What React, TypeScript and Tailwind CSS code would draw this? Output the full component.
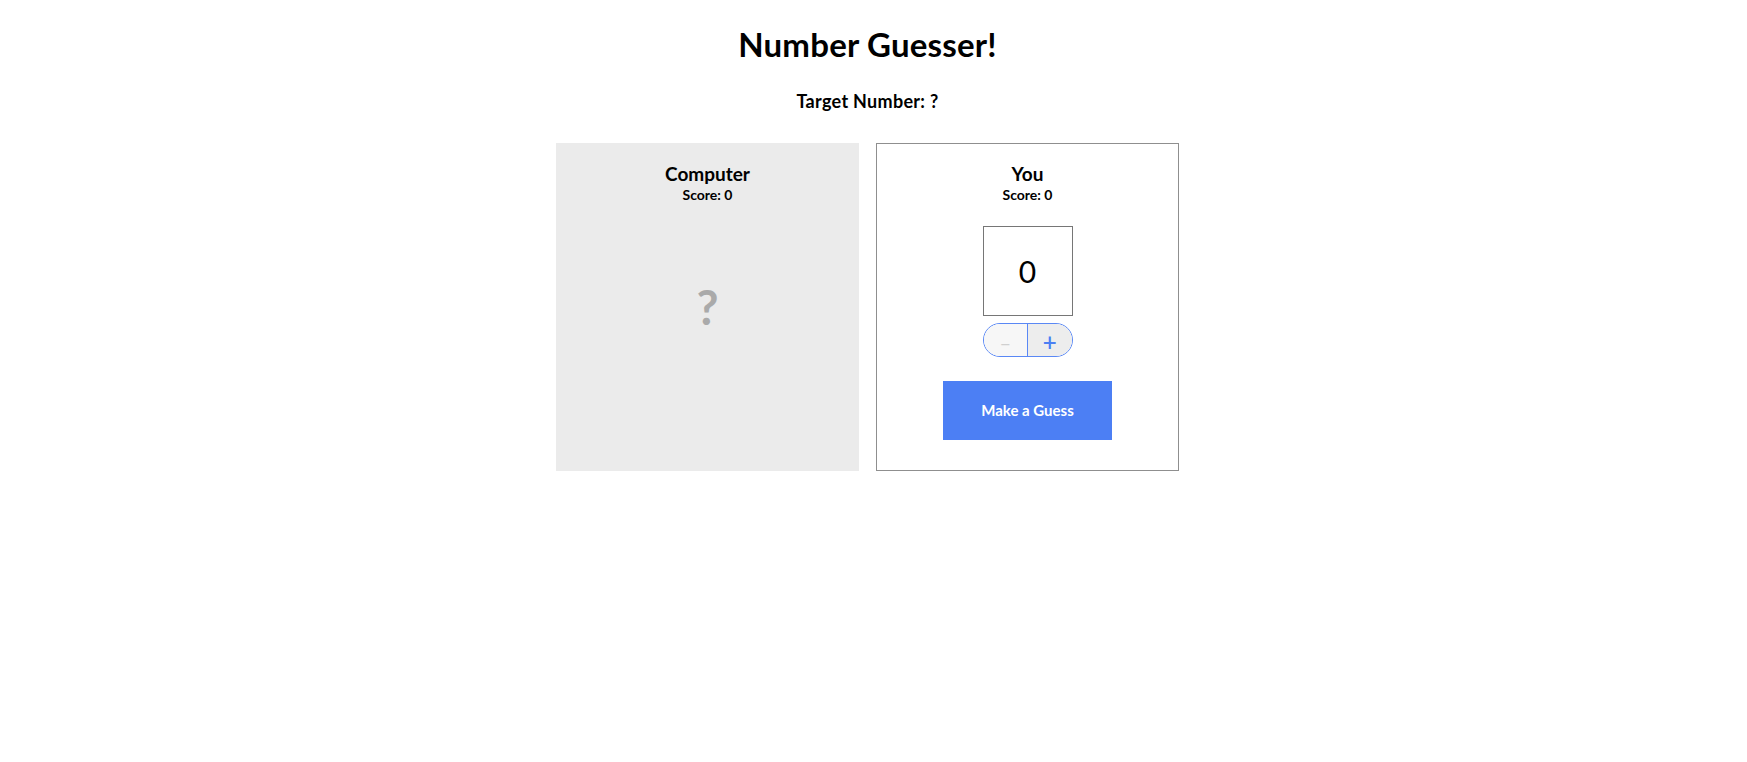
import { useState } from "react";

export default function App() {
  const [guess, setGuess] = useState(0);

  return (
    <div className="w-[1735px] min-h-[762px] bg-white text-black flex flex-col items-center font-['Lato',sans-serif]">
      <h1 className="mt-[24px] text-[33px] leading-[40px] font-bold tracking-[0.2px]">Number Guesser!</h1>
      <h3 className="mt-[25px] text-[18px] leading-[24px] font-bold tracking-[0.3px]">Target Number: ?</h3>

      <div className="mt-[30px] flex gap-[17px]">
        <div className="w-[303px] h-[328px] bg-[#ebebeb] flex flex-col items-center pt-[20px]">
          <h2 className="text-[19px] leading-[22px] font-bold">Computer</h2>
          <p className="mt-[1px] text-[14px] leading-[17px] font-bold">Score: 0</p>
          <div className="mt-[80px] text-[48px] leading-none font-bold text-[#aaaaaa]">?</div>
        </div>

        <div className="w-[303px] h-[328px] border border-[#8f8f8f] flex flex-col items-center pt-[19px]">
          <h2 className="text-[19px] leading-[22px] font-bold">You</h2>
          <p className="mt-[1px] text-[14px] leading-[17px] font-bold">Score: 0</p>
          <input
            type="text"
            value={guess}
            readOnly
            className="mt-[23px] w-[90px] h-[90px] border border-[#767676] text-center text-[30px] outline-none font-['Lato',sans-serif]"
          />
          <div className="mt-[7px] w-[90px] h-[34px] flex rounded-full border border-[#5a88f5] overflow-hidden">
            <button
              className="flex-1 bg-[#f7f7f7] text-[#d0d0d0] text-[20px] leading-none pt-[3px] border-r border-[#5a88f5]"
              onClick={() => setGuess(Math.max(0, guess - 1))}
            >
              –
            </button>
            <button
              className="flex-1 bg-[#ededed] text-[#4b7ff3] text-[24px] leading-none pt-[3px] font-semibold"
              onClick={() => setGuess(Math.min(9, guess + 1))}
            >
              +
            </button>
          </div>
          <button className="mt-[24px] w-[169px] h-[59px] bg-[#4c7ff4] text-white text-[15px] font-bold">
            Make a Guess
          </button>
        </div>
      </div>
    </div>
  );
}
